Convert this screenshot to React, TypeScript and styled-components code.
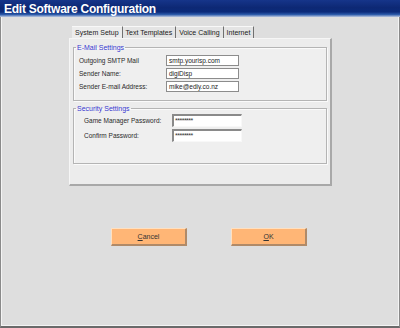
import React from "react";
import styled, { createGlobalStyle } from "styled-components";

const Global = createGlobalStyle`
  html, body { margin: 0; padding: 0; background: #dedede; }
  * { box-sizing: border-box; }
`;

const Window = styled.div`
  width: 400px;
  height: 328px;
  display: flex;
  flex-direction: column;
  background: #dedede;
  border-left: 1px solid #8a8a8a;
  border-right: 1px solid #8a8a8a;
  border-bottom: 2px solid #6a6a6a;
  box-shadow: inset 1px 0 0 #f4f4f4, inset -1px 0 0 #f4f4f4, inset 0 -1px 0 #f4f4f4;
  font-family: "Liberation Sans", Arial, sans-serif;
`;

const TitleBar = styled.div`
  height: 17px;
  padding-left: 4px;
  display: flex;
  align-items: center;
  color: #fff;
  font-weight: bold;
  font-size: 12px;
  letter-spacing: -0.25px;
  background: linear-gradient(#16358a 0%, #0d2874 45%, #0b2a7a 70%, #2a58a8 85%, #b8c6e0 100%);
  margin: 0 -1px;
`;

const Body = styled.div`
  flex: 1;
  display: flex;
  flex-direction: column;
  padding: 9px 0 0 68px;
`;

const TabRow = styled.div`
  display: flex;
  height: 12px;
  padding-left: 3px;
`;

const Tab = styled.div<{ $active?: boolean }>`
  padding: 0 3px 0 3px;
  font-size: 7px;
  line-height: 12px;
  color: #222;
  background: ${(p) => (p.$active ? "#ececec" : "#e4e4e4")};
  border-right: 1px solid #707070;
  border-top: 1px solid #f8f8f8;
`;

const Panel = styled.div`
  width: 263px;
  height: 148px;
  background: #ececec;
  border: 1px solid #f6f6f6;
  border-right: 2px solid #a8a8a8;
  border-bottom: 2px solid #a8a8a8;
  padding: 5px 3px 0 3px;
  display: flex;
  flex-direction: column;
  gap: 4px;
`;

const Group = styled.fieldset<{ $h: number }>`
  margin: 0;
  height: ${(p) => p.$h}px;
  padding: 0 4px 0 4px;
  border: 1px solid #b4b4b4;
  box-shadow: 1px 1px 0 #fafafa, inset 1px 1px 0 #fafafa;
  background: #efefef;
  display: flex;
  flex-direction: column;
`;

const Legend = styled.legend`
  padding: 0 1px;
  margin-left: -2px;
  font-size: 7px;
  line-height: 7px;
  color: #3838d0;
`;

const FieldList = styled.div<{ $gap: number; $top: number; $indent: number }>`
  display: flex;
  flex-direction: column;
  gap: ${(p) => p.$gap}px;
  padding-top: ${(p) => p.$top}px;
  padding-left: ${(p) => p.$indent}px;
`;

const Row = styled.div`
  display: flex;
  align-items: center;
`;

const Label = styled.div<{ $w: number }>`
  width: ${(p) => p.$w}px;
  font-size: 6.5px;
  color: #2a2a2a;
`;

const Input = styled.div`
  width: 73px;
  height: 11px;
  background: #fff;
  border: 1px solid #8c8c8c;
  font-size: 6.5px;
  line-height: 9px;
  padding-left: 2px;
  color: #222;
`;

const PwInput = styled.div`
  width: 70px;
  height: 13px;
  background: #fff;
  border-top: 2px solid #8a8a8a;
  border-left: 2px solid #8a8a8a;
  border-right: 1px solid #f8f8f8;
  border-bottom: 1px solid #f8f8f8;
  font-size: 7px;
  line-height: 9px;
  padding-left: 1px;
  color: #333;
  letter-spacing: -0.5px;
`;

const ButtonRow = styled.div`
  display: flex;
  gap: 44px;
  padding-left: 42px;
  margin-top: 42px;
`;

const Button = styled.div`
  width: 76px;
  height: 18px;
  background: #ffb676;
  border-right: 2px solid #b08a68;
  border-bottom: 2px solid #b08a68;
  border-top: 1px solid #ffe0c0;
  border-left: 1px solid #ffe0c0;
  display: flex;
  align-items: center;
  justify-content: center;
  font-size: 7px;
  color: #333;
`;

const U = styled.span`
  text-decoration: underline;
`;

export default function App() {
  return (
    <>
      <Global />
      <Window>
        <TitleBar>Edit Software Configuration</TitleBar>
        <Body>
          <TabRow>
            <Tab $active>System Setup</Tab>
            <Tab>Text Templates</Tab>
            <Tab>Voice Calling</Tab>
            <Tab>Internet</Tab>
          </TabRow>
          <Panel>
            <Group $h={57}>
              <Legend>E-Mail Settings</Legend>
              <FieldList $gap={2} $top={4} $indent={1}>
                <Row>
                  <Label $w={87}>Outgoing SMTP Mail</Label>
                  <Input>smtp.yourisp.com</Input>
                </Row>
                <Row>
                  <Label $w={87}>Sender Name:</Label>
                  <Input>digiDisp</Input>
                </Row>
                <Row>
                  <Label $w={87}>Sender E-mail Address:</Label>
                  <Input>mike@ediy.co.nz</Input>
                </Row>
              </FieldList>
            </Group>
            <Group $h={59}>
              <Legend>Security Settings</Legend>
              <FieldList $gap={2} $top={2} $indent={6}>
                <Row>
                  <Label $w={88}>Game Manager Password:</Label>
                  <PwInput>********</PwInput>
                </Row>
                <Row>
                  <Label $w={88}>Confirm Password:</Label>
                  <PwInput>********</PwInput>
                </Row>
              </FieldList>
            </Group>
          </Panel>
          <ButtonRow>
            <Button>
              <span>
                <U>C</U>ancel
              </span>
            </Button>
            <Button>
              <span>
                <U>O</U>K
              </span>
            </Button>
          </ButtonRow>
        </Body>
      </Window>
    </>
  );
}
